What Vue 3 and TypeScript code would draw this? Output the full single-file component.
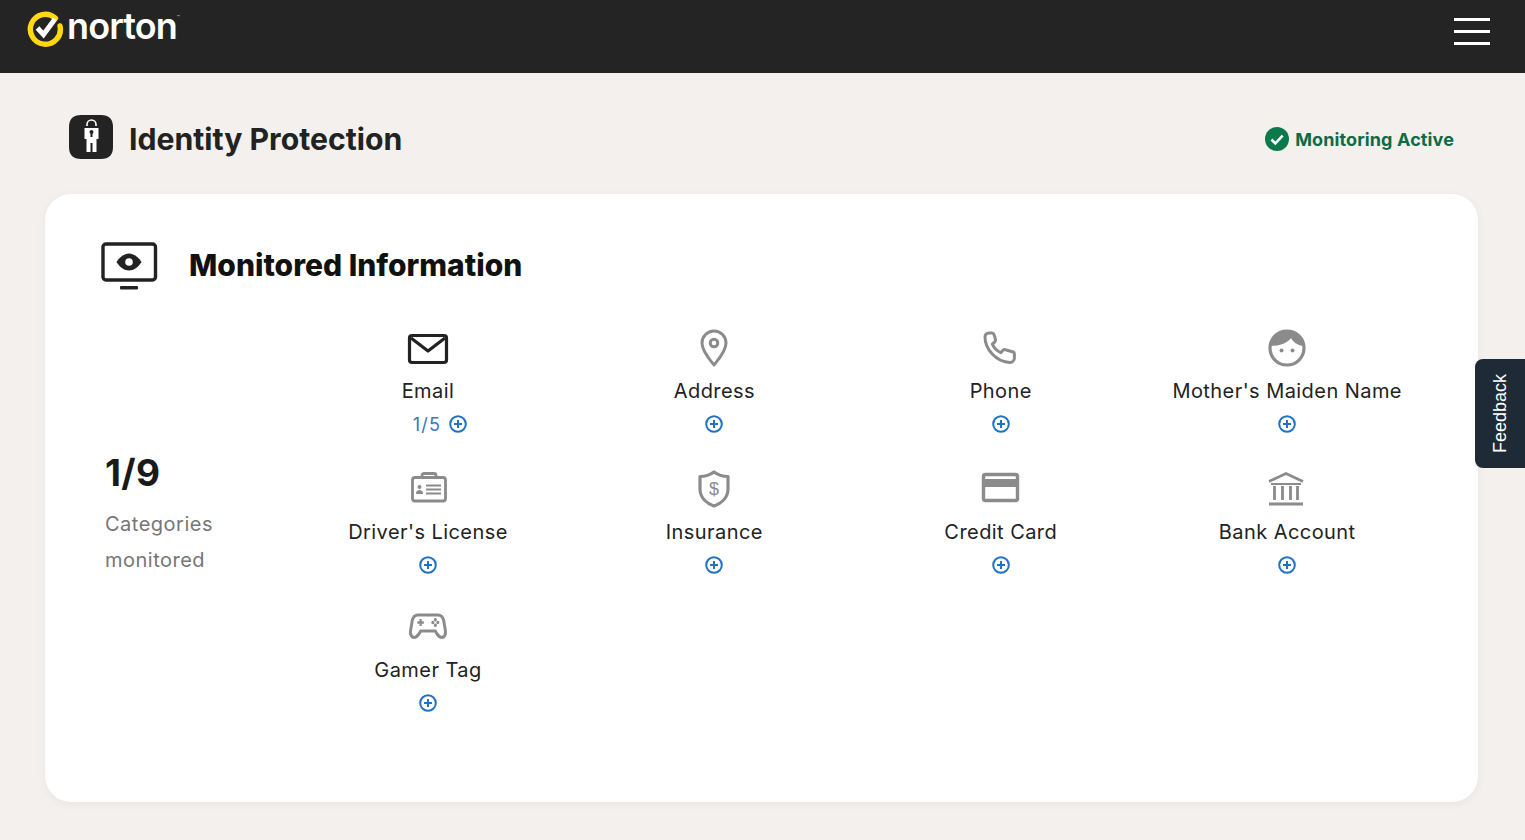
<script setup lang="ts">
interface Category {
  id: string
  label: string
  count?: string
}

const categories: Category[] = [
  { id: 'email', label: 'Email', count: '1/5' },
  { id: 'address', label: 'Address' },
  { id: 'phone', label: 'Phone' },
  { id: 'mother', label: "Mother's Maiden Name" },
  { id: 'license', label: "Driver's License" },
  { id: 'insurance', label: 'Insurance' },
  { id: 'card', label: 'Credit Card' },
  { id: 'bank', label: 'Bank Account' },
  { id: 'gamer', label: 'Gamer Tag' },
]
</script>

<template>
  <div class="page">
    <header class="topbar">
      <div class="logo">
        <svg width="38" height="38" viewBox="0 0 38 38" class="logo-mark">
          <path d="M29.500 8.200A15 15 0 1 0 34 16" fill="none" stroke="#ffd714" stroke-width="5.400" stroke-linecap="round" />
          <path d="M11.500 18l6 6.500L29 9" fill="none" stroke="#fff" stroke-width="5" />
        </svg>
        <span class="logo-text">norton</span><span class="tm">™</span>
      </div>
      <button class="menu" aria-label="Menu">
        <span></span><span></span><span></span>
      </button>
    </header>

    <section class="title-row">
      <div class="title-left">
        <svg class="title-icon" width="46" height="46" viewBox="0 0 46 46">
          <path d="M12 1h20c8 0 12 4 12 12v20c0 8-4 12-12 12H12C4 45 0 41 0 33V13C0 5 4 1 12 1z" fill="#232323" />
          <path d="M18 12v-1.500a4.500 4.500 0 0 1 9 0V12" fill="none" stroke="#fff" stroke-width="1.600" />
          <path d="M15.500 14h14v11h-2v13h-4V29h-2v9h-4V25h-2z" fill="#fff" />
          <circle cx="22.500" cy="18" r="2" fill="#232323" />
          <rect x="21.500" y="18" width="2" height="5" fill="#232323" />
        </svg>
        <h1>Identity Protection</h1>
      </div>
      <div class="status">
        <svg width="24" height="24" viewBox="0 0 24 24">
          <circle cx="12" cy="12" r="12" fill="#0b7a4b" />
          <path d="M6.500 12.500l3.800 3.800 7.400-7.600" fill="none" stroke="#fff" stroke-width="2.600" />
        </svg>
        <span>Monitoring Active</span>
      </div>
    </section>

    <main class="card">
      <div class="card-head">
        <svg width="58" height="48" viewBox="0 0 58 48">
          <rect x="2" y="2" width="52.500" height="36" rx="3" fill="none" stroke="#222" stroke-width="3.400" />
          <path d="M15.500 20c3-5 8-8.500 12.500-8.500s9.500 3.500 12.500 8.500c-3 5-8 8.500-12.500 8.500s-9.500-3.500-12.500-8.500z" fill="#222" />
          <circle cx="28" cy="20" r="3.800" fill="#fff" />
          <rect x="19" y="44" width="18" height="3.600" rx="1" fill="#222" />
        </svg>
        <h2>Monitored Information</h2>
      </div>

      <div class="card-body">
        <div class="summary">
          <div class="summary-num">1/9</div>
          <div class="summary-text">Categories<br />monitored</div>
        </div>

        <div class="grid">
          <div v-for="cat in categories" :key="cat.id" class="item">
            <svg class="icon" width="48" height="40" viewBox="0 0 48 40">
              <g v-if="cat.id === 'email'" fill="none" stroke="#222" stroke-width="3.200" stroke-linejoin="round">
                <rect x="5.500" y="7.500" width="37" height="27" rx="2.500" />
                <path d="M7 10l17 13 17-13" />
              </g>
              <g v-else-if="cat.id === 'address'" fill="none" stroke="#8b8b8b" stroke-width="3" transform="translate(0 1)">
                <path d="M24 36c-1-1.500-12-13-12-22a12 12 0 0 1 24 0c0 9-11 20.500-12 22z" stroke-linejoin="round" />
                <circle cx="24" cy="14" r="3.800" />
              </g>
              <path
                v-else-if="cat.id === 'phone'"
                d="M12 5h3c1 0 1.800.7 2.100 1.700l1.400 5c.2.9 0 1.700-.7 2.300l-2.500 2.200c1.800 4 4.600 6.800 8.500 8.500l2.300-2.400c.6-.6 1.500-.9 2.300-.6l7 2c1.200.4 2 1.200 2 2.400V30c0 2.600-2 4.500-4.500 4.500C19 34 8 21 8 9c0-2.300 1.700-4 4-4z"
                fill="none"
                stroke="#8b8b8b"
                stroke-width="3"
                stroke-linejoin="round"
              />
              <g v-else-if="cat.id === 'mother'">
                <circle cx="24" cy="20" r="17" fill="none" stroke="#8b8b8b" stroke-width="3.200" />
                <path d="M8 18a16 16 0 0 1 32 0c-6-1-10-4-12-8-3 5-12 8-20 8z" fill="#8b8b8b" />
                <circle cx="18.500" cy="22.500" r="2" fill="#8b8b8b" />
                <circle cx="29.500" cy="22.500" r="2" fill="#8b8b8b" />
              </g>
              <g v-else-if="cat.id === 'license'" fill="none" stroke="#8b8b8b" stroke-width="2.800" transform="translate(0 -1)">
                <rect x="8.500" y="9.500" width="33" height="23.500" rx="2.500" />
                <path d="M18 9V7.500a2 2 0 0 1 2-2h10a2 2 0 0 1 2 2V9" />
                <circle cx="15.500" cy="19" r="2" fill="#8b8b8b" stroke="none" />
                <path d="M12 26c0-3 1.500-4 3.500-4s3.500 1 3.500 4z" fill="#8b8b8b" stroke="none" />
                <path d="M22 17.500h15M22 21.500h15M22 25.500h15" stroke-width="2.200" />
              </g>
              <g v-else-if="cat.id === 'insurance'" transform="translate(0 -1)">
                <path d="M24 4c4 3 9 4.500 14 4.500V21c0 9-7 14.500-14 17-7-2.500-14-8-14-17V8.500C15 8.500 20 7 24 4z" fill="none" stroke="#8b8b8b" stroke-width="3.200" stroke-linejoin="round" />
                <text x="24" y="27" text-anchor="middle" class="dollar">$</text>
              </g>
              <g v-else-if="cat.id === 'card'" transform="translate(0 -1)">
                <rect x="6.500" y="6.500" width="34" height="26" rx="2" fill="none" stroke="#8b8b8b" stroke-width="3.400" />
                <rect x="6.500" y="11" width="34" height="8" fill="#8b8b8b" />
              </g>
              <g v-else-if="cat.id === 'bank'" fill="none" stroke="#8b8b8b" stroke-width="2.800" transform="translate(0 -1)">
                <path d="M6 13.500L23 5.500l17 8" />
                <path d="M8 16h30" stroke-width="2" />
                <path d="M11.500 18v14M19.500 18v14M27.500 18v14M34.500 18v14" />
                <path d="M6 36h34" stroke-width="3" />
              </g>
              <g v-else fill="none" stroke="#8b8b8b" stroke-width="3.200" stroke-linejoin="round" transform="translate(1.900 0) scale(.92 1)">
                <path d="M13 8h22c3 0 5 2 6 5l2 11c.6 4-1.500 6.500-4 6.500s-4-2-5.500-4L32 24H16l-1.500 2.500c-1.500 2-3 4-5.500 4s-4.600-2.500-4-6.500l2-11c1-3 3-5 6-5z" />
                <path d="M12.500 15.500h7M16 12v7" stroke-width="2.400" />
                <circle cx="32" cy="12.800" r="1.100" fill="#8b8b8b" stroke-width="1.200" />
                <circle cx="32" cy="18.200" r="1.100" fill="#8b8b8b" stroke-width="1.200" />
                <circle cx="29.300" cy="15.500" r="1.100" fill="#8b8b8b" stroke-width="1.200" />
                <circle cx="34.700" cy="15.500" r="1.100" fill="#8b8b8b" stroke-width="1.200" />
              </g>
            </svg>
            <div class="label">{{ cat.label }}</div>
            <div class="add" :class="{ 'has-count': cat.count }">
              <span v-if="cat.count" class="count">{{ cat.count }}</span>
              <svg width="18" height="18" viewBox="0 0 18 18">
                <circle cx="9" cy="9" r="7.800" fill="none" stroke="#1f72c4" stroke-width="2" />
                <path d="M9 5v8M5 9h8" stroke="#1f72c4" stroke-width="2" />
              </svg>
            </div>
          </div>
        </div>
      </div>
    </main>

    <button class="feedback"><span>Feedback</span></button>
  </div>
</template>

<style>
html,
body {
  margin: 0;
  background: #f3f0ed;
}
</style>

<style scoped>
.page {
  position: relative;
  height: 840px;
  overflow: hidden;
  background: #f3f0ed;
  font-family: Inter, "Liberation Sans", sans-serif;
  color: #222;
}

.topbar {
  height: 73px;
  box-sizing: border-box;
  padding: 10px 35px 0 26px;
  background: #242424;
  display: flex;
  justify-content: space-between;
  align-items: flex-start;
}

.logo {
  display: flex;
  align-items: flex-start;
  color: #fff;
}

.logo-mark {
  margin-right: 3px;
}

.logo-text {
  font-family: Inter, "Liberation Sans", sans-serif;
  font-size: 36px;
  font-weight: 600;
  line-height: 32px;
  letter-spacing: -0.900px;
}

.tm {
  font-size: 5px;
  line-height: 14px;
  color: #ccc;
}

.menu {
  margin-top: 8px;
  padding: 0;
  width: 36px;
  border: 0;
  background: none;
  display: flex;
  flex-direction: column;
  gap: 9px;
}

.menu span {
  display: block;
  height: 3px;
  background: #fff;
}

.title-row {
  height: 121px;
  box-sizing: border-box;
  padding: 41px 71px 0 69px;
  display: flex;
  justify-content: space-between;
  align-items: flex-start;
}

.title-left {
  display: flex;
  align-items: flex-start;
  gap: 14px;
}

.title-icon {
  display: block;
}

h1 {
  margin: 7px 0 0;
  font-size: 30.200px;
  line-height: 37px;
  font-weight: 700;
  color: #222;
}

.status {
  margin-top: 13px;
  display: flex;
  align-items: center;
  gap: 6px;
  font-size: 18px;
  font-weight: 700;
  letter-spacing: 0.120px;
  color: #0f6b45;
}

.card {
  margin: 0 47px 0 45px;
  height: 608px;
  box-sizing: border-box;
  padding: 48px 48px 0 56px;
  background: #fff;
  border-radius: 26px;
  box-shadow: 0 2px 10px rgba(0, 0, 0, 0.05);
}

.card-head {
  display: flex;
  align-items: flex-start;
  gap: 30px;
  height: 86px;
}

h2 {
  margin: 3px 0 0;
  font-size: 30px;
  line-height: 40px;
  font-weight: 800;
  color: #111;
}

.card-body {
  display: flex;
}

.summary {
  width: 183.800px;
  flex: none;
  padding: 123px 0 0 4px;
  box-sizing: border-box;
}

.summary-num {
  font-size: 37px;
  font-weight: 700;
  line-height: 44px;
  letter-spacing: 0.300px;
  color: #1a1a1a;
}

.summary-text {
  margin-top: 11px;
  font-size: 20px;
  line-height: 36px;
  letter-spacing: 0.500px;
  color: #767676;
}

.grid {
  flex: 1;
  display: grid;
  grid-template-columns: repeat(4, 286.400px);
  grid-template-rows: 141px 138px auto;
}

.item {
  display: flex;
  flex-direction: column;
  align-items: center;
}

.icon {
  display: block;
}

.dollar {
  font-family: "Liberation Sans", sans-serif;
  font-size: 18px;
  fill: #8b8b8b;
}

.label {
  margin-top: 11px;
  font-size: 20px;
  line-height: 24px;
  letter-spacing: 0.440px;
  color: #222;
  white-space: nowrap;
}

.add {
  margin-top: 9px;
  height: 24px;
  display: flex;
  align-items: center;
  gap: 8px;
}

.has-count {
  margin-left: 24px;
}

.count {
  font-size: 18px;
  letter-spacing: 1.200px;
  color: #3a75c4;
}

.feedback {
  position: absolute;
  top: 359px;
  right: 0;
  width: 50px;
  height: 109px;
  padding: 0;
  border: 0;
  border-radius: 8px 0 0 8px;
  background: #1f2a37;
  color: #fff;
  display: flex;
  align-items: center;
  justify-content: center;
}

.feedback span {
  writing-mode: vertical-rl;
  transform: rotate(180deg);
  font-family: "Liberation Sans", Arial, sans-serif;
  font-size: 18px;
}
</style>
